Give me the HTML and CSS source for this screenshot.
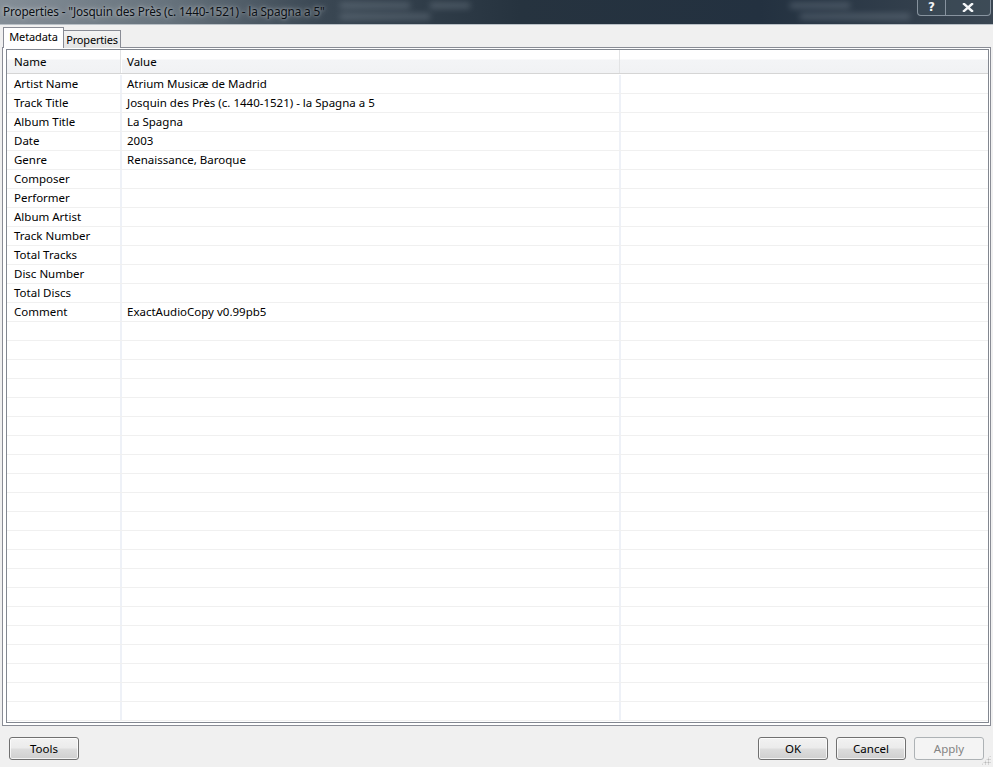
FILE: index.html
```html
<!DOCTYPE html>
<html>
<head>
<meta charset="utf-8">
<link rel="stylesheet" href="styles.css">
</head>
<body>
<div class="window">
  <div class="titlebar">
    <div class="blur-rows">
      <span class="b1"></span><span class="b2"></span><span class="b3"></span><span class="b4"></span><span class="b5"></span>
    </div>
    <div class="title">Properties - "Josquin des Près (c. 1440-1521) - la Spagna a 5"</div>
    <div class="caption-btns">
      <div class="cbtn help">?</div>
      <div class="cbtn close">
        <svg width="12" height="9" viewBox="0 0 12 9"><path d="M2 1 L10 8 M10 1 L2 8" stroke="#f4f6f8" stroke-width="2.4" stroke-linecap="square"/></svg>
      </div>
    </div>
  </div>
  <div class="client">
    <div class="tabs">
      <div class="tab active">Metadata</div>
      <div class="tab">Properties</div>
    </div>
    <div class="panel">
      <div class="list">
        <div class="hdr">
          <div class="hc c1">Name</div>
          <div class="hc c2">Value</div>
          <div class="hc c3"></div>
        </div>
        <div class="rows" id="rows">
          <div class="row"><div class="c c1">Artist Name</div><div class="c c2">Atrium Musicæ de Madrid</div><div class="c c3"></div></div>
          <div class="row"><div class="c c1">Track Title</div><div class="c c2">Josquin des Près (c. 1440-1521) - la Spagna a 5</div><div class="c c3"></div></div>
          <div class="row"><div class="c c1">Album Title</div><div class="c c2">La Spagna</div><div class="c c3"></div></div>
          <div class="row"><div class="c c1">Date</div><div class="c c2">2003</div><div class="c c3"></div></div>
          <div class="row"><div class="c c1">Genre</div><div class="c c2">Renaissance, Baroque</div><div class="c c3"></div></div>
          <div class="row"><div class="c c1">Composer</div><div class="c c2"></div><div class="c c3"></div></div>
          <div class="row"><div class="c c1">Performer</div><div class="c c2"></div><div class="c c3"></div></div>
          <div class="row"><div class="c c1">Album Artist</div><div class="c c2"></div><div class="c c3"></div></div>
          <div class="row"><div class="c c1">Track Number</div><div class="c c2"></div><div class="c c3"></div></div>
          <div class="row"><div class="c c1">Total Tracks</div><div class="c c2"></div><div class="c c3"></div></div>
          <div class="row"><div class="c c1">Disc Number</div><div class="c c2"></div><div class="c c3"></div></div>
          <div class="row"><div class="c c1">Total Discs</div><div class="c c2"></div><div class="c c3"></div></div>
          <div class="row"><div class="c c1">Comment</div><div class="c c2">ExactAudioCopy v0.99pb5</div><div class="c c3"></div></div>
          <div class="row"><div class="c c1"></div><div class="c c2"></div><div class="c c3"></div></div>
          <div class="row"><div class="c c1"></div><div class="c c2"></div><div class="c c3"></div></div>
          <div class="row"><div class="c c1"></div><div class="c c2"></div><div class="c c3"></div></div>
          <div class="row"><div class="c c1"></div><div class="c c2"></div><div class="c c3"></div></div>
          <div class="row"><div class="c c1"></div><div class="c c2"></div><div class="c c3"></div></div>
          <div class="row"><div class="c c1"></div><div class="c c2"></div><div class="c c3"></div></div>
          <div class="row"><div class="c c1"></div><div class="c c2"></div><div class="c c3"></div></div>
          <div class="row"><div class="c c1"></div><div class="c c2"></div><div class="c c3"></div></div>
          <div class="row"><div class="c c1"></div><div class="c c2"></div><div class="c c3"></div></div>
          <div class="row"><div class="c c1"></div><div class="c c2"></div><div class="c c3"></div></div>
          <div class="row"><div class="c c1"></div><div class="c c2"></div><div class="c c3"></div></div>
          <div class="row"><div class="c c1"></div><div class="c c2"></div><div class="c c3"></div></div>
          <div class="row"><div class="c c1"></div><div class="c c2"></div><div class="c c3"></div></div>
          <div class="row"><div class="c c1"></div><div class="c c2"></div><div class="c c3"></div></div>
          <div class="row"><div class="c c1"></div><div class="c c2"></div><div class="c c3"></div></div>
          <div class="row"><div class="c c1"></div><div class="c c2"></div><div class="c c3"></div></div>
          <div class="row"><div class="c c1"></div><div class="c c2"></div><div class="c c3"></div></div>
          <div class="row"><div class="c c1"></div><div class="c c2"></div><div class="c c3"></div></div>
          <div class="row"><div class="c c1"></div><div class="c c2"></div><div class="c c3"></div></div>
          <div class="row"><div class="c c1"></div><div class="c c2"></div><div class="c c3"></div></div>
          <div class="row"><div class="c c1"></div><div class="c c2"></div><div class="c c3"></div></div>
        </div>
      </div>
    </div>
    <div class="footer">
      <button class="btn">Tools</button>
      <div class="spacer"></div>
      <button class="btn">OK</button>
      <button class="btn">Cancel</button>
      <button class="btn disabled">Apply</button>
    </div>
    <div class="grip"></div>
  </div>
</div>
</body>
</html>
```

FILE: styles.css
```css
* { box-sizing: border-box; }
html, body { margin: 0; padding: 0; }
body {
  width: 993px;
  height: 767px;
  overflow: hidden;
  font-family: "Noto Sans", "Open Sans", sans-serif;
  font-size: 11.5px;
  color: #000;
  background: #f0f0f0;
}
.window { width: 993px; height: 767px; display: flex; flex-direction: column; }

.titlebar {
  position: relative;
  height: 25px;
  flex: none;
  background: linear-gradient(90deg, #848e97 0px, #66727c 170px, #3a4753 320px, #26333f 520px, #233140 760px, #3a4652 993px);
  border-bottom: 1px solid #b9c0c6;
  overflow: hidden;
}
.blur-rows { position: absolute; inset: 0; filter: blur(3px); opacity: 0.35; }
.blur-rows span { position: absolute; height: 5px; background: #9aa6b2; }
.b1 { left: 340px; top: 3px; width: 70px; }
.b2 { left: 430px; top: 3px; width: 40px; }
.b3 { left: 790px; top: 3px; width: 60px; }
.b4 { left: 340px; top: 14px; width: 90px; }
.b5 { left: 800px; top: 14px; width: 110px; }
.title {
  position: relative;
  padding: 3px 0 0 3px;
  color: #0b0f14;
  font-size: 11.8px;
  letter-spacing: -0.15px;
  white-space: nowrap;
  text-shadow: 0 0 6px rgba(255,255,255,0.55), 0 0 3px rgba(255,255,255,0.45);
}
.caption-btns {
  position: absolute;
  top: -1px;
  right: 2px;
  display: flex;
}
.cbtn {
  height: 17px;
  border: 1px solid rgba(200,210,220,0.55);
  border-top: none;
  background: rgba(70,85,98,0.35);
  color: #f2f4f6;
  display: flex;
  align-items: center;
  justify-content: center;
  font-family: "DejaVu Sans", sans-serif;
  font-weight: bold;
  font-size: 12px;
}
.help { width: 29px; border-radius: 0 0 0 4px; }
.close { width: 45px; border-left: none; border-radius: 0 0 4px 0; }

.client { flex: 1; display: flex; flex-direction: column; position: relative; }

.tabs { display: flex; align-items: flex-end; height: 23px; padding-left: 3px; margin-bottom: -1px; position: relative; z-index: 1; }
.tab {
  width: 58px;
  height: 18px;
  border: 1px solid #898c95;
  border-bottom: none;
  background: linear-gradient(#f3f3f3, #e4e4e4);
  font-size: 11px;
  line-height: 18px;
  letter-spacing: -0.2px;
  text-align: center;
  white-space: nowrap;
  margin-left: -1px;
}
.tab.active {
  width: 61px;
  height: 21px;
  background: #fff;
  line-height: 18px;
  margin-left: 0;
  border-bottom: none;
  z-index: 2;
  font-size: 11px;
  letter-spacing: -0.1px;
}

.panel {
  margin: 0 2px 0 2px;
  height: 679px;
  flex: none;
  border: 1px solid #898c95;
  background: #fff;
  padding: 1px 1px 2px 3px;
}
.list {
  height: 100%;
  border: 1px solid #828790;
  background: #fff;
  overflow: hidden;
}
.hdr {
  display: flex;
  height: 24px;
  border-bottom: 1px solid #d5d5d5;
  background: linear-gradient(#ffffff 0px, #ffffff 9px, #f3f4f6 10px, #f1f2f4 22px);
}
.hc { height: 23px; line-height: 23px; }
.hc.c1 { width: 114px; padding-left: 7px; border-right: 1px solid #e2e3e5; box-shadow: 1px 0 0 #fff; }
.hc.c2 { width: 499px; padding-left: 6px; border-right: 1px solid #e2e3e5; }
.hc.c3 { flex: 1; }

.rows { padding-top: 1px; }
.row { display: flex; height: 19px; border-bottom: 1px solid #f0f0f0; }
.c { line-height: 18px; white-space: nowrap; overflow: hidden; }
.c.c1 { width: 115px; padding-left: 7px; border-right: 2px solid #eef1f7; }
.c.c2 { width: 499px; padding-left: 5px; border-right: 2px solid #eef1f7; }
.c.c3 { flex: 1; }

.footer {
  display: flex;
  align-items: flex-start;
  padding: 11px 9px 0 9px;
  gap: 9px;
}
.spacer { flex: 1; }
.btn {
  width: 70px;
  height: 23px;
  border: 1px solid #707070;
  border-radius: 3px;
  background: linear-gradient(#f2f2f2 0%, #ebebeb 48%, #dddddd 52%, #cfcfcf 100%);
  box-shadow: inset 0 0 0 1px rgba(255,255,255,0.75);
  font-family: "Noto Sans", "Open Sans", sans-serif;
  font-size: 11.5px;
  color: #000;
  padding: 0;
  line-height: 20px;
}
.btn + .btn { margin-left: -1px; }
.btn.disabled {
  border-color: #adb2b5;
  background: #f4f4f4;
  color: #838383;
  box-shadow: none;
}
.grip {
  position: absolute;
  right: 2px;
  bottom: 2px;
  width: 10px;
  height: 10px;
  background: radial-gradient(circle, #b8b8b8 0.8px, transparent 1.2px) 0 0 / 3px 3px;
  clip-path: polygon(100% 0, 100% 100%, 0 100%);
}
```
